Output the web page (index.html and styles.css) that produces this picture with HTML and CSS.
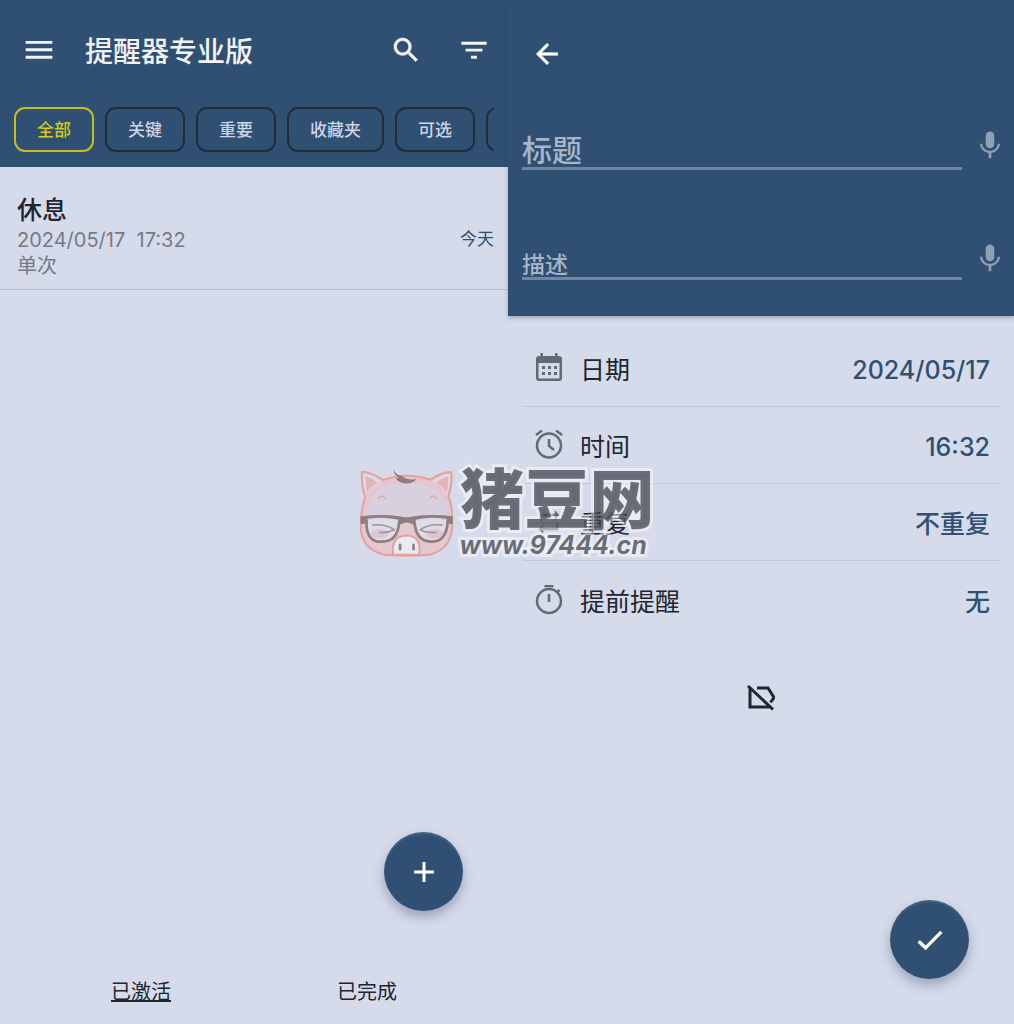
FILE: index.html
```html
<!DOCTYPE html>
<html lang="zh-CN">
<head>
    <meta charset="UTF-8">
    <meta name="viewport" content="width=device-width, initial-scale=1.0">
    <title>提醒器专业版</title>
    <link rel="stylesheet" href="styles.css">
</head>
<body>
    <main class="screens">
        <section class="screen">
            <header class="list-header">
                <div class="topbar">
                    <button class="icon-btn" aria-label="菜单">
                        <svg class="icon" viewBox="0 0 24 24"><path d="M2 18.500h20v-2.200H2zM2 12.900h20v-2.200H2zM2 5.200v2.200h20V5.200z"/></svg>
                    </button>
                    <h1 class="app-name">提醒器专业版</h1>
                    <button class="icon-btn" aria-label="搜索">
                        <svg class="icon" viewBox="0 0 24 24"><path d="M15.500 14h-.79l-.28-.27C15.410 12.590 16 11.110 16 9.500 16 5.910 13.090 3 9.500 3S3 5.910 3 9.500 5.910 16 9.500 16c1.610 0 3.090-.59 4.230-1.570l.27.28v.79l5.200 5.200L20.700 19.200l-5.200-5.200zm-6 0C7.010 14 5 11.990 5 9.500S7.010 5 9.500 5 14 7.010 14 9.500 11.990 14 9.500 14z" stroke="currentColor" stroke-width=".4"/></svg>
                    </button>
                    <button class="icon-btn" aria-label="筛选">
                        <svg class="icon" viewBox="0 0 24 24"><path d="M9.800 18.500h4.400v-2.200H9.800zM2.500 5.800V8h19V5.800zM5.700 13.200h12.600V11H5.700z"/></svg>
                    </button>
                </div>
                <div class="chips">
                    <button class="chip active">全部</button>
                    <button class="chip">关键</button>
                    <button class="chip">重要</button>
                    <button class="chip">收藏夹</button>
                    <button class="chip">可选</button>
                    <button class="chip" aria-label="更多"></button>
                </div>
            </header>
            <article class="reminder">
                <div>
                    <h2 class="reminder-title">休息</h2>
                    <p class="reminder-info">2024/05/17&nbsp; 17:32</p>
                    <p class="reminder-info">单次</p>
                </div>
                <span class="reminder-day">今天</span>
            </article>
            <button class="fab" aria-label="添加">
                <svg class="icon" viewBox="0 0 24 24"><path d="M20 13.200h-6.800V20h-2.400v-6.800H4v-2.400h6.800V4h2.400v6.800H20z"/></svg>
            </button>
            <nav class="tabs">
                <a href="#active" class="tab current">已激活</a>
                <a href="#done" class="tab">已完成</a>
            </nav>
        </section>

        <section class="screen">
            <header class="edit-header">
                <button class="icon-btn back" aria-label="返回">
                    <svg class="icon" viewBox="0 0 24 24"><path d="M20 11H7.830l5.590-5.590L12 4l-8 8 8 8 1.410-1.410L7.830 13H20v-2z" stroke="currentColor" stroke-width=".4"/></svg>
                </button>
                <div class="field field-title">
                    <input type="text" placeholder="标题" aria-label="标题">
                    <button class="icon-btn mic" aria-label="语音输入标题">
                        <svg class="icon" viewBox="0 0 24 24"><path d="M12 14.500c1.800 0 3.200-1.400 3.200-3.200V5c0-1.800-1.400-3.200-3.200-3.200S8.800 3.200 8.800 5v6.300c0 1.800 1.400 3.200 3.200 3.200zm5.700-3.500c0 3-2.740 5.300-5.700 5.300S6.300 14 6.300 11H4.500c0 3.410 2.920 6.430 6.500 6.920V22h2v-4.080c3.580-.49 6.500-3.510 6.500-6.920h-1.800z"/></svg>
                    </button>
                </div>
                <div class="field field-text">
                    <input type="text" placeholder="描述" aria-label="描述">
                    <button class="icon-btn mic" aria-label="语音输入描述">
                        <svg class="icon" viewBox="0 0 24 24"><path d="M12 14.500c1.800 0 3.200-1.400 3.200-3.200V5c0-1.800-1.400-3.200-3.200-3.200S8.800 3.200 8.800 5v6.300c0 1.800 1.400 3.200 3.200 3.200zm5.700-3.500c0 3-2.740 5.300-5.700 5.300S6.300 14 6.300 11H4.500c0 3.410 2.920 6.430 6.500 6.920V22h2v-4.080c3.580-.49 6.500-3.510 6.500-6.920h-1.800z"/></svg>
                    </button>
                </div>
            </header>
            <div class="options">
                <button class="option">
                    <svg class="option-icon" viewBox="0 0 28 30"><path fill-rule="evenodd" d="M5.500 0h2.500v3h12V0h2.500v3H24a3 3 0 0 1 3 3v19a3 3 0 0 1-3 3H4a3 3 0 0 1-3-3V6a3 3 0 0 1 3-3h1.500zM3.500 10v15.500h21V10z"/><path d="M7 13h3v3H7zM13 13h3v3h-3zM19 13h3v3h-3zM7 19h3v3H7zM13 19h3v3h-3zM19 19h3v3h-3z"/></svg>
                    <span class="option-name">日期</span>
                    <span class="option-value">2024/05/17</span>
                </button>
                <button class="option">
                    <svg class="option-icon line" viewBox="0 0 28 30"><circle cx="14" cy="15.500" r="12"/><path d="M14 9v7l5 4M1 5l6-4.500M27 5l-6-4.500"/></svg>
                    <span class="option-name">时间</span>
                    <span class="option-value">16:32</span>
                </button>
                <button class="option">
                    <svg class="option-icon" viewBox="0 0 24 24"><path d="M4 5h13V2l4 4-4 4V7H6v4H4zM20 19H7v3l-4-4 4-4v3h11v-4h2z"/></svg>
                    <span class="option-name">重复</span>
                    <span class="option-value">不重复</span>
                </button>
                <button class="option">
                    <svg class="option-icon line" viewBox="0 0 28 30"><circle cx="14" cy="16" r="12"/><path d="M9.500 1h9M14 9v8M22 7.500l2.500-2.500"/></svg>
                    <span class="option-name">提前提醒</span>
                    <span class="option-value">无</span>
                </button>
            </div>
            <button class="label-btn" aria-label="无标签">
                <svg class="icon" viewBox="0 0 28 28"><path d="M1 2l25 23.500M3 4v19h20M10 4h11l6 9.500-3.500 5"/></svg>
            </button>
            <button class="fab fab-save" aria-label="保存">
                <svg class="icon" viewBox="0 0 24 24"><path d="M8.500 16.400L3.900 12l-1.900 1.900L8.500 20.200 22 6.400l-1.900-1.900z"/></svg>
            </button>
        </section>
    </main>

    <div class="watermark">
        <svg class="pig" viewBox="40 40 280 265">
            <path class="pig-skin" d="M47 50Q80 54 110 76Q180 50 251 75Q283 52 314 52Q317 90 304 125Q318 150 316 210Q316 280 250 298Q180 304 112 298Q44 280 44 215Q43 165 57 128Q45 90 47 50z"/>
            <path class="pig-face" d="M63 170Q67 88 180 80Q290 86 302 170L300 190H63z"/>
            <path class="pig-light" d="M51 57Q80 60 104 79Q75 96 58 121Q50 90 51 57zM310 57Q282 60 258 79Q288 95 302 121Q311 90 310 57z"/>
            <path class="pig-ear" d="M57 64Q78 70 93 84Q72 97 61 114zM305 64Q285 70 268 84Q290 96 301 114z"/>
            <path class="pig-light" d="M62 196Q104 184 156 196Q157 255 105 258Q64 253 62 196zM204 196Q250 184 299 196Q296 255 255 258Q207 255 204 196z"/>
            <ellipse class="pig-cheek" cx="100" cy="236" rx="26" ry="14"/>
            <ellipse class="pig-cheek" cx="264" cy="236" rx="26" ry="14"/>
            <path class="pig-brow" d="M97 130Q107 116 117 131M250 130Q260 116 270 131"/>
            <path class="pig-nose" d="M140 298Q133 242 181 241Q226 242 218 298z"/>
            <path class="pig-nostril" d="M161 269v13M201 269v13"/>
            <path class="pig-glass" d="M61 196Q58 263 107 259Q155 259 158 200L166 201Q182 192 196 201L204 202Q208 258 253 259Q300 262 303 196"/>
            <path class="pig-dark" d="M43 184Q100 176 160 184Q181 190 202 184Q260 176 318 184V207L306 206L302 192Q252 184 210 193L200 208Q181 196 163 208L154 193Q105 184 60 192L56 206L43 207z"/>
            <path class="pig-dark" d="M141 44Q151 65 166 63Q178 77 210 73Q198 88 178 86Q157 84 148 71L157 69Q143 63 141 44z"/>
            <path class="pig-eye" d="M80 210Q115 205 144 224M99 232Q123 234 144 224M286 210Q247 205 221 224M268 232Q239 234 221 224"/>
        </svg>
        <div class="brand">
            <span class="brand-name">猪豆网</span>
            <span class="brand-url">www.97444.cn</span>
        </div>
    </div>
</body>
</html>
```
FILE: styles.css
```css
*{
    margin: 0;
    padding: 0;
    box-sizing: border-box;
}
body{
    background: #d6dbeb;
    color: #20262e;
    font-family: Inter, "Noto Sans CJK SC", sans-serif;
}
button{
    border: 0;
    background: none;
    color: inherit;
    font: inherit;
    cursor: pointer;
}
.screens{
    display: grid;
    grid-template-columns: 508fr 506fr;
    min-height: 100vh;
}
.screen{
    min-width: 0;
    display: flex;
    flex-direction: column;
}
.icon{
    display: block;
    width: 32px;
    height: 32px;
    fill: currentColor;
}
.icon-btn{
    width: 32px;
    height: 32px;
}

/* list screen */
.list-header{
    background: #2f5072;
    color: #f2f4fa;
    padding: 28px 14px 15px;
}
.topbar{
    display: flex;
    align-items: center;
    gap: 36px;
    height: 44px;
    padding: 0 4px 0 9px;
}
.app-name{
    flex: 1;
    margin-left: -6px;
    padding-top: 4px;
    font-size: 28px;
    line-height: 44px;
    font-weight: 500;
}
.chips{
    display: flex;
    gap: 11px;
    margin-top: 35px;
    overflow: hidden;
}
.chip{
    flex: none;
    min-width: 80px;
    height: 45px;
    padding: 0 21px;
    border: 2px solid #222d3a;
    border-radius: 11px;
    color: #ced5e5;
    font-size: 17px;
    line-height: 24px;
    font-weight: 500;
}
.chip.active{
    border-color: #c9bd1c;
    color: #d5ca14;
}
.reminder{
    display: flex;
    justify-content: space-between;
    align-items: center;
    padding: 26px 14px 10px 17px;
    border-bottom: 1px solid #b8bdcb;
}
.reminder-title{
    font-size: 25px;
    line-height: 34px;
    font-weight: 500;
}
.reminder-info{
    color: #757a84;
    font-size: 20px;
    line-height: 26px;
}
.reminder-day{
    color: #2f5072;
    font-size: 17px;
    line-height: 26px;
    padding-top: 6px;
}
.fab{
    display: flex;
    align-items: center;
    justify-content: center;
    width: 79px;
    height: 79px;
    margin: auto 45px 47px auto;
    border-radius: 50%;
    background: #2f5072;
    color: #fff;
    box-shadow: 0 6px 12px rgba(40, 60, 90, .35), inset 0 2px 2px rgba(255, 255, 255, .12);
}
.fab .icon{
    width: 30px;
    height: 30px;
}
.fab-save{
    margin-bottom: 45px;
}
.tabs{
    display: flex;
    height: 66px;
    padding: 0 28px;
}
.tab{
    flex: 1;
    color: inherit;
    font-size: 20px;
    line-height: 68px;
    text-align: center;
    text-decoration: none;
}
.tab.current{
    text-decoration: underline;
}

/* edit screen */
.edit-header{
    background: #2f5072;
    color: #fff;
    padding: 38px 8px 36px 14px;
    box-shadow: 0 2px 4px rgba(40, 60, 90, .35);
}
.back{
    display: block;
    margin-left: 9px;
}
.field{
    display: flex;
    align-items: center;
    gap: 12px;
}
.field input{
    flex: 1;
    min-width: 0;
    border: 0;
    border-bottom: 3px solid #7187a0;
    outline: 0;
    background: none;
    color: #fff;
    font-family: inherit;
    font-weight: 500;
}
.field input::placeholder{
    color: #a9b4c8;
    opacity: 1;
}
.field-title{
    margin-top: 50px;
}
.field-title input{
    height: 50px;
    padding-top: 12px;
    font-size: 30px;
}
.field-text{
    margin-top: 66px;
}
.field-text input{
    height: 44px;
    padding-top: 16px;
    font-size: 23px;
}
.mic{
    color: #8f9fb4;
}
.options{
    padding: 14px 14px 0;
}
.option{
    display: flex;
    align-items: center;
    width: 100%;
    height: 77px;
    padding: 0 10px 0 13px;
    border-bottom: 1px solid #c3c8d7;
    text-align: left;
    font-size: 25px;
    line-height: 36px;
}
.option:last-child{
    border-bottom: 0;
}
.option-icon{
    width: 28px;
    height: 30px;
    margin-right: 17px;
    fill: #646a73;
}
.option-icon.line{
    fill: none;
    stroke: #646a73;
    stroke-width: 2.500;
}
.option-name{
    flex: 1;
    padding-top: 4px;
}
.option-value{
    padding-top: 4px;
    color: #2f5072;
    font-weight: 500;
}
.label-btn{
    align-self: center;
    margin-top: 46px;
}
.label-btn .icon{
    width: 28px;
    height: 28px;
    fill: none;
    stroke: #20262e;
    stroke-width: 3;
}

/* site mark over both screens */
.watermark{
    position: absolute;
    top: 50%;
    left: 50%;
    transform: translate(-50%, -50%);
    display: flex;
    align-items: center;
    gap: 6px;
    pointer-events: none;
}
.pig{
    width: 94px;
    height: 89px;
}
.pig path{
    stroke-linecap: round;
    stroke-linejoin: round;
}
.pig-skin{
    fill: #e5c7d0;
    stroke: #e6a09d;
    stroke-width: 6;
}
.pig-face{
    fill: #d9d0df;
}
.pig-light{
    fill: #dcdde9;
}
.pig-ear{
    fill: #e3b3b7;
}
.pig-cheek{
    fill: #dfc5d1;
}
.pig-nose{
    fill: #e8e9f2;
    stroke: #e6a09d;
    stroke-width: 6;
}
.pig-brow{
    fill: none;
    stroke: #dba5a7;
    stroke-width: 4;
}
.pig-dark{
    fill: #8f7d80;
}
.pig-glass, .pig-eye, .pig-nostril{
    fill: none;
    stroke: #8f7d80;
    stroke-width: 8;
}
.pig-eye{
    stroke: #a5949b;
    stroke-width: 5;
}
.brand{
    display: flex;
    flex-direction: column;
    gap: 6px;
    color: rgba(58, 61, 70, .72);
    white-space: nowrap;
    -webkit-text-stroke: 6px rgba(255, 255, 255, .45);
    paint-order: stroke fill;
}
.brand-name{
    font-family: "Noto Sans CJK SC", sans-serif;
    font-size: 65px;
    line-height: 60px;
    font-weight: 900;
}
.brand-url{
    font-size: 25px;
    line-height: 28px;
    font-style: italic;
    font-weight: 700;
}
```
